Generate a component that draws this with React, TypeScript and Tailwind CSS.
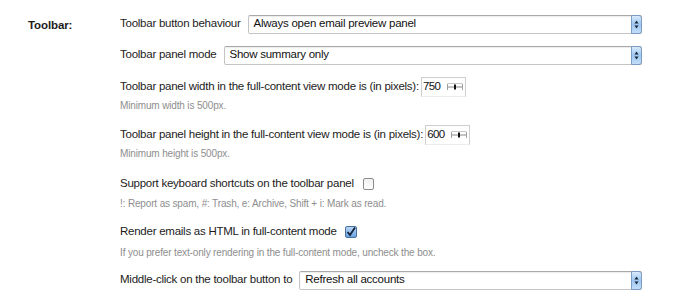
import React from 'react';

const font = { fontFamily: '"Liberation Sans", Arial, sans-serif' };

const SelectBox: React.FC<{ value: string }> = ({ value }) => (
  <div className="flex-1 h-[19px] flex items-center border border-[#c4c4c4] border-t-[#a9a9a9] rounded-[2px] bg-white shadow-[inset_0_1px_1px_rgba(0,0,0,0.08)] relative">
    <span className="pl-[5px] text-[11.5px] tracking-[-0.25px] text-[#111] leading-none">{value}</span>
    <div className="absolute right-[-1px] top-[-1px] bottom-[-1px] w-[11px] rounded-r-[3px] border border-[#7d9cc2] bg-gradient-to-b from-[#d9eafb] via-[#9cc6f1] to-[#c4def8] flex items-center justify-center">
      <svg width="5" height="9" viewBox="0 0 5 9">
        <path d="M2.5 0.5 L4.5 3.5 L0.5 3.5 Z" fill="#1b2533" />
        <path d="M2.5 8.5 L4.5 5.5 L0.5 5.5 Z" fill="#1b2533" />
      </svg>
    </div>
  </div>
);

const NumberBox: React.FC<{ value: string }> = ({ value }) => (
  <div className="w-[45px] h-[20px] flex items-center border border-[#cfcfcf] border-b-[#ececec] bg-white">
    <span className="pl-[1px] text-[11.5px] tracking-[-0.6px] text-[#111] leading-none">{value}</span>
    <svg className="ml-auto mr-[2px]" width="16" height="8" viewBox="0 0 16 8">
      <line x1="0.5" y1="1" x2="0.5" y2="7" stroke="#a0a0a0" />
      <line x1="15.5" y1="1" x2="15.5" y2="7" stroke="#a0a0a0" />
      <line x1="0.5" y1="0.5" x2="15.5" y2="0.5" stroke="#c8c8c8" />
      <line x1="1" y1="4" x2="15" y2="4" stroke="#888" />
      <rect x="7" y="1.5" width="2" height="5" fill="#111" />
    </svg>
  </div>
);

const Checkbox: React.FC<{ checked?: boolean }> = ({ checked }) =>
  checked ? (
    <div className="w-[12px] h-[12px] rounded-[2px] border border-[#4a6f9c] bg-gradient-to-b from-[#b9d6f5] to-[#6aa2e0] flex items-center justify-center">
      <svg width="10" height="10" viewBox="0 0 10 10">
        <path d="M1.5 5 L4 8 L9 0.5" fill="none" stroke="#13233d" strokeWidth="1.8" />
      </svg>
    </div>
  ) : (
    <div className="w-[11px] h-[12px] rounded-[2px] border border-[#8c8c8c] bg-gradient-to-b from-[#f0f0f0] to-white" />
  );

const Label: React.FC<{ children: React.ReactNode }> = ({ children }) => (
  <span className="text-[11.5px] tracking-[-0.25px] text-[#1c1c1c] leading-none whitespace-nowrap">{children}</span>
);

const Hint: React.FC<{ children: React.ReactNode; className?: string }> = ({ children, className }) => (
  <div className={`h-[12px] flex items-center text-[10px] tracking-[-0.15px] text-[#8e8e8e] leading-none whitespace-nowrap ${className}`}>
    {children}
  </div>
);

export default function App() {
  return (
    <div className="w-[680px] h-[301px] bg-white flex" style={font}>
      <div className="w-[120px] pl-[28px] pt-[16px] leading-none">
        <span className="text-[11.5px] font-bold text-[#1c1c1c] tracking-[-0.1px] leading-none">Toolbar:</span>
      </div>
      <div className="w-[522px] flex flex-col">
        <div className="mt-[14px] h-[20px] flex items-center gap-[7px]">
          <Label>Toolbar button behaviour</Label>
          <SelectBox value="Always open email preview panel" />
        </div>
        <div className="mt-[11px] h-[20px] flex items-center gap-[7px]">
          <Label>Toolbar panel mode</Label>
          <SelectBox value="Show summary only" />
        </div>
        <div className="mt-[12px] h-[20px] flex items-center gap-[2px]">
          <Label>Toolbar panel width in the full-content view mode is (in pixels):</Label>
          <NumberBox value="750" />
        </div>
        <Hint className="mt-[3px]">Minimum width is 500px.</Hint>
        <div className="mt-[13px] h-[20px] flex items-center gap-[2px]">
          <Label>Toolbar panel height in the full-content view mode is (in pixels):</Label>
          <NumberBox value="600" />
        </div>
        <Hint className="mt-[3px]">Minimum height is 500px.</Hint>
        <div className="mt-[14px] h-[20px] flex items-center gap-[9px]">
          <Label>Support keyboard shortcuts on the toolbar panel</Label>
          <Checkbox />
        </div>
        <Hint className="mt-[4px]">!: Report as spam, #: Trash, e: Archive, Shift + i: Mark as read.</Hint>
        <div className="mt-[12px] h-[20px] flex items-center gap-[8px]">
          <Label>Render emails as HTML in full-content mode</Label>
          <Checkbox checked />
        </div>
        <Hint className="mt-[5px]">If you prefer text-only rendering in the full-content mode, uncheck the box.</Hint>
        <div className="mt-[11px] h-[20px] flex items-center gap-[7px]">
          <Label>Middle-click on the toolbar button to</Label>
          <SelectBox value="Refresh all accounts" />
        </div>
      </div>
    </div>
  );
}
